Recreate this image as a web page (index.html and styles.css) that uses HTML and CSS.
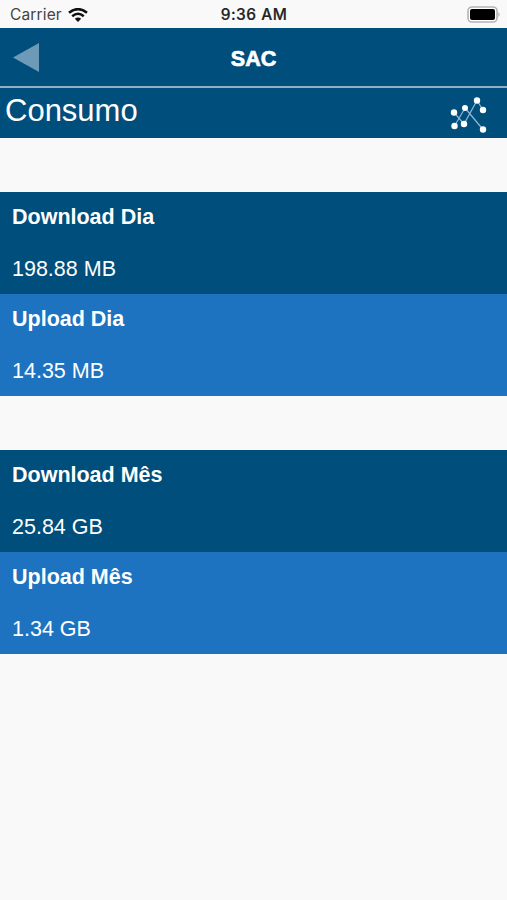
FILE: index.html
```html
<!DOCTYPE html>
<html lang="pt">
<head>
<meta charset="utf-8">
<title>SAC</title>
<link rel="stylesheet" href="styles.css">
</head>
<body>
<header class="status">
  <div class="carrier"><span class="carrier-name">Carrier</span>
    <svg class="wifi" width="20" height="14" viewBox="0 0 20 14"><g fill="none" stroke="#111" stroke-width="2.5"><path d="M1 4.8Q10-2.6 19 4.8"/><path d="M4.2 8.2Q10 3.2 15.8 8.2"/></g><path d="M6.8 10.7Q10 8.2 13.2 10.7L10 14Z" fill="#111"/></svg>
  </div>
  <span class="time">9:36 AM</span>
  <svg class="battery" width="34" height="18" viewBox="0 0 34 18"><rect x="1" y="1" width="29" height="15" rx="4" fill="#fff" stroke="#b4b4b4" stroke-width="1.6"/><rect x="3" y="3" width="25" height="11" rx="2" fill="#000"/><path d="M31.5 6q2 2.5 0 5z" fill="#999"/></svg>
</header>
<nav class="navbar">
  <svg class="back" width="26" height="29" viewBox="0 0 26 29"><path d="M0 14.5L26 0V29Z" fill="#6c9ab8"/></svg>
  <h1 class="title">SAC</h1>
</nav>
<section class="heading">
  <h2 class="heading-text">Consumo</h2>
  <svg class="chart" width="38" height="38" viewBox="0 0 38 38"><path d="M5 15.5L15 27M5.500 29L16 11M15 27L28 3.500L34 13M16 11L34 32.500" fill="none" stroke="#8fb8d8" stroke-width="1.200"/><g fill="#fff"><circle cx="5" cy="15.500" r="3.200"/><circle cx="5.500" cy="29" r="3.200"/><circle cx="16" cy="11" r="3"/><circle cx="15" cy="27" r="3.200"/><circle cx="28" cy="3.500" r="3.200"/><circle cx="34" cy="13" r="3.200"/><circle cx="34" cy="32.500" r="3.200"/></g></svg>
</section>
<main>
  <section class="group">
    <div class="item dark"><h3 class="label">Download Dia</h3><p class="value">198.88 MB</p></div>
    <div class="item light"><h3 class="label">Upload Dia</h3><p class="value">14.35 MB</p></div>
  </section>
  <section class="group">
    <div class="item dark"><h3 class="label">Download Mês</h3><p class="value">25.84 GB</p></div>
    <div class="item light"><h3 class="label">Upload Mês</h3><p class="value">1.34 GB</p></div>
  </section>
</main>
</body>
</html>
```
FILE: styles.css
```css
* { box-sizing: border-box; margin: 0; padding: 0; }
body {
  height: 900px;
  overflow: hidden;
  background: #f9f9f9;
  color: #fff;
  font-family: "Liberation Sans", Arial, sans-serif;
}
svg { display: block; }
.status {
  display: grid;
  grid-template-columns: 1fr auto 1fr;
  align-items: center;
  height: 28px;
  padding: 2px 6px 0 10px;
  color: #222;
  font: 15.5px/24px Inter, sans-serif;
}
.carrier { display: flex; align-items: center; gap: 6px; }
.carrier-name { color: #444; letter-spacing: .15px; }
.time { font-weight: 500; letter-spacing: .5px; margin-left: -3px; -webkit-text-stroke: .2px #222; }
.battery { justify-self: end; }
.navbar {
  display: grid;
  grid-template-columns: 1fr auto 1fr;
  align-items: center;
  height: 60px;
  padding: 0 13px;
  background: #004e7b;
  border-bottom: 2px solid #95adc8;
}
.title { grid-column: 2; font-size: 21.5px; line-height: 24px; padding-top: 3px; -webkit-text-stroke: .7px #fff; }
.heading {
  display: flex;
  align-items: center;
  justify-content: space-between;
  height: 50px;
  padding: 0 20px 0 5px;
  background: #004e7b;
}
.heading-text { font-size: 31px; font-weight: 400; line-height: 36px; padding-bottom: 4px; }
.chart { margin-top: 5px; }
.group { margin-top: 54px; }
.item { height: 102px; padding: 12px; }
.dark { background: #004e7b; }
.light { background: #1d73bf; }
.label { font-size: 21.5px; line-height: 26px; }
.value { margin-top: 26px; font-size: 21.5px; line-height: 26px; }
```
